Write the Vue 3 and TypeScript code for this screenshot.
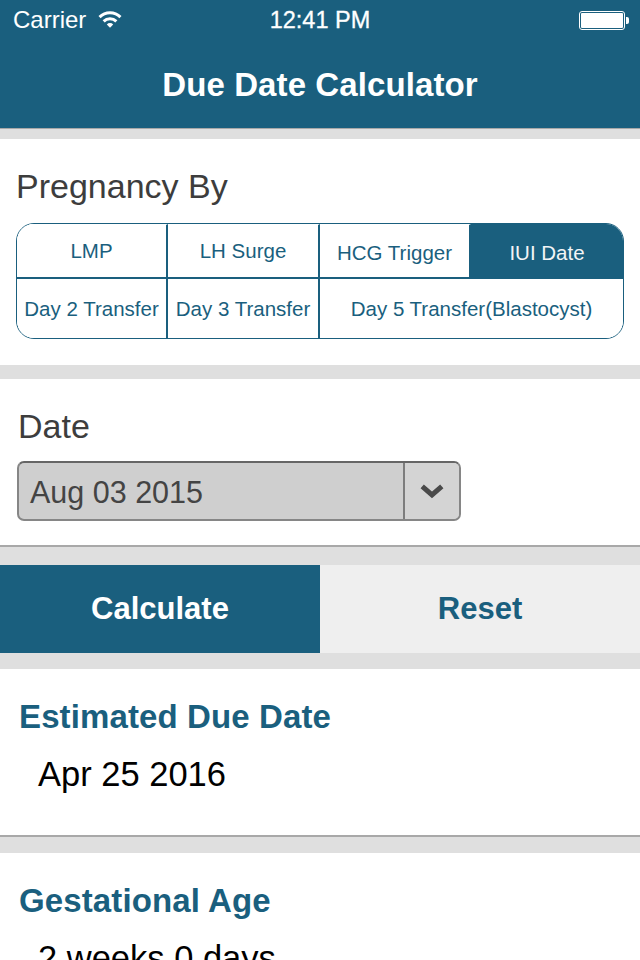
<script setup lang="ts">
import { ref } from 'vue'

// pregnancy options, span = grid columns taken
const options = [
  { label: 'LMP', span: 1 },
  { label: 'LH Surge', span: 1 },
  { label: 'HCG Trigger', span: 1 },
  { label: 'IUI Date', span: 1 },
  { label: 'Day 2 Transfer', span: 1 },
  { label: 'Day 3 Transfer', span: 1 },
  { label: 'Day 5 Transfer(Blastocyst)', span: 2 }
]

const selected = ref('IUI Date')
</script>

<template>
  <div class="page">
    <header class="topbar">
      <div class="status">
        <div class="status-left">
          <span>Carrier</span>
          <svg class="wifi" width="24" height="18" viewBox="0 0 24 18">
            <path d="M0.5 6 A16.5 16.5 0 0 1 23.5 6 L21.4 8.2 A13.4 13.4 0 0 0 2.6 8.2 Z" fill="#fff" />
            <path d="M4.6 10.2 A10.6 10.6 0 0 1 19.4 10.2 L17.3 12.4 A7.6 7.6 0 0 0 6.7 12.4 Z" fill="#fff" />
            <path d="M8.8 14.4 A4.6 4.6 0 0 1 15.2 14.4 L12 17.8 Z" fill="#fff" />
          </svg>
        </div>
        <span class="time">12:41 PM</span>
        <div class="battery"><i class="battery-body"><i class="battery-fill"></i></i><i class="battery-cap"></i></div>
      </div>
      <h1 class="title">Due Date Calculator</h1>
    </header>

    <section class="panel by-panel">
      <h2 class="label">Pregnancy By</h2>
      <div class="segments">
        <button
          v-for="o in options"
          :key="o.label"
          class="segment"
          :class="{ active: o.label === selected, wide: o.span === 2 }"
          @click="selected = o.label"
        >
          {{ o.label }}
        </button>
      </div>
    </section>

    <section class="panel date-panel">
      <h2 class="label date-label">Date</h2>
      <div class="date-select">
        <span class="date-value">Aug 03 2015</span>
        <span class="date-arrow">
          <svg width="26" height="18" viewBox="0 0 26 18">
            <path d="M3.2 4.4 L13 13 L22.8 4.4" fill="none" stroke="#4a4a4a" stroke-width="5" />
          </svg>
        </span>
      </div>
    </section>

    <div class="actions">
      <button class="action primary">Calculate</button>
      <button class="action">Reset</button>
    </div>

    <section class="panel result">
      <h3 class="result-title">Estimated Due Date</h3>
      <p class="result-value">Apr 25 2016</p>
    </section>

    <section class="panel result last">
      <h3 class="result-title">Gestational Age</h3>
      <p class="result-value">2 weeks 0 days</p>
    </section>
  </div>
</template>

<style>
html, body {
  margin: 0;
  background: #dfdfdf;
  overflow: hidden;
}
</style>

<style scoped>
.page {
  height: 960px;
  overflow: hidden;
  font-family: "Liberation Sans", Arial, sans-serif;
  background: #dfdfdf;
}

/* top bar */
.topbar {
  height: 128px;
  background: #1a5f7e;
  border-bottom: 1px solid #a8a8a8;
  color: #fff;
}
.status {
  height: 40px;
  display: flex;
  align-items: center;
  justify-content: space-between;
  position: relative;
  padding: 0 11px 0 13px;
  font-size: 24px;
}
.status-left {
  display: flex;
  align-items: center;
  gap: 12px;
}
.wifi {
  margin-top: -3px;
}
.time {
  position: absolute;
  left: 0;
  right: 0;
  text-align: center;
  font-size: 23.5px;
  -webkit-text-stroke: 0.3px #fff;
}
.battery {
  display: flex;
  align-items: center;
  width: 50px;
  height: 19px;
}
.battery-body {
  display: block;
  width: 46px;
  height: 19px;
  box-sizing: border-box;
  padding: 1px;
  border: 1px solid #fff;
  border-radius: 3px;
}
.battery-fill {
  display: block;
  height: 100%;
  background: #fff;
  border-radius: 1px;
}
.battery-cap {
  display: block;
  width: 3px;
  height: 7px;
  margin-left: 1px;
  background: #fff;
  border-radius: 0 2px 2px 0;
}
.title {
  margin: 0;
  height: 88px;
  line-height: 89px;
  text-align: center;
  font-size: 33px;
  font-weight: 700;
  letter-spacing: 0.1px;
}

/* panels */
.panel {
  background: #fff;
}
.by-panel {
  margin-top: 10px;
  height: 226px;
  padding: 0 16px;
  box-sizing: border-box;
}
.label {
  margin: 0;
  padding-top: 26px;
  padding-bottom: 1px;
  font-size: 34px;
  line-height: 42px;
  font-weight: 400;
  color: #3d3d3d;
}
.segments {
  display: grid;
  grid-template-columns: 151px 152px 151px 1fr;
  grid-template-rows: 55px 60px;
  height: 116px;
  margin-top: 15px;
  box-sizing: border-box;
  border: 1px solid #1a5f7e;
  border-radius: 18px;
  overflow: hidden;
}
.segment {
  padding: 0;
  border: 0;
  border-right: 2px solid #1a5f7e;
  border-bottom: 2px solid #1a5f7e;
  background: #fff;
  color: #1a5f7e;
  font-family: inherit;
  font-size: 20.5px;
}
/* the dividers of the top row stop short of the outer border */
.segment:nth-child(-n + 3) {
  border-top: 1px solid #fff;
}
.segment:nth-child(3),
.segment:nth-child(4) {
  padding-top: 4px;
}
.segment:nth-child(4) {
  border-right: 0;
}
.segment:nth-child(n + 5) {
  border-bottom: 0;
}
.segment.wide {
  grid-column: span 2;
  border-right: 0;
}
.segment.active {
  background: #1a5f7e;
  color: #f2f5f7;
}

.date-panel {
  margin-top: 14px;
  height: 168px;
  padding: 0 18px;
  box-sizing: border-box;
  border-bottom: 2px solid #a8a8a8;
}
.date-select {
  display: flex;
  width: 444px;
  height: 60px;
  margin-top: 13px;
  margin-left: -1px;
  box-sizing: border-box;
  border: 2px solid #868686;
  border-top-color: #666;
  border-radius: 7px;
  background: #cfcfcf;
  overflow: hidden;
}
.date-value {
  flex: 1;
  padding-left: 11px;
  line-height: 58px;
  font-size: 30.5px;
  color: #444;
}
.date-arrow {
  width: 54px;
  display: flex;
  align-items: center;
  justify-content: center;
  border-left: 2px solid #7d7d7d;
  background: #d4d4d4;
}

/* buttons */
.actions {
  display: flex;
  margin-top: 18px;
  height: 88px;
}
.action {
  flex: 1;
  padding: 0;
  border: 0;
  background: #efefef;
  color: #1a5f7e;
  font-family: inherit;
  font-size: 31px;
  font-weight: 700;
}
.action.primary {
  background: #1a5f7e;
  color: #fff;
}

/* results */
.result {
  margin-top: 16px;
  height: 168px;
  box-sizing: border-box;
  border-bottom: 2px solid #a8a8a8;
  padding: 27px 19px 0;
}
.result.last {
  height: 120px;
  border-bottom: 0;
}
.result-title {
  margin: 0;
  font-size: 33px;
  line-height: 42px;
  font-weight: 700;
  letter-spacing: 0.12px;
  color: #1a5f7e;
}
.result-value {
  margin: 14px 0 0 19px;
  font-size: 34.5px;
  line-height: 44px;
  color: #000;
}
</style>
